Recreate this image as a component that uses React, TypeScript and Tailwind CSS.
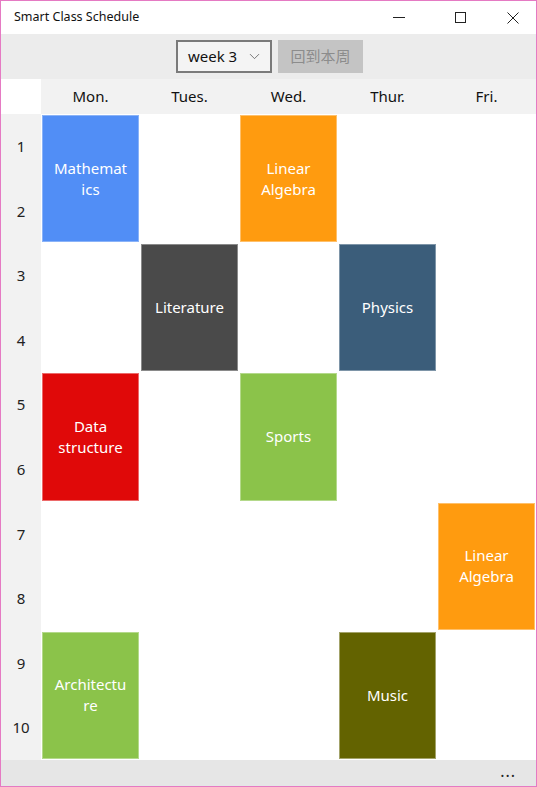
import { ChevronDown } from "lucide-react";

const days = ["Mon.", "Tues.", "Wed.", "Thur.", "Fri."];

type Course = { name: string; day: number; start: number; color: string; border: string };

// day: 1-5, start: first period (each class takes 2 periods)
const courses: Course[] = [
  { name: "Mathematics", day: 1, start: 1, color: "bg-[#518ef6]", border: "border-[#8ab3f8]" },
  { name: "Linear Algebra", day: 3, start: 1, color: "bg-[#ff9b0f]", border: "border-[#ffc06a]" },
  { name: "Literature", day: 2, start: 3, color: "bg-[#4a4a4a]", border: "border-[#8a8a8a]" },
  { name: "Physics", day: 4, start: 3, color: "bg-[#3b5d7a]", border: "border-[#7e95a8]" },
  { name: "Data structure", day: 1, start: 5, color: "bg-[#e00909]", border: "border-[#ec6a6a]" },
  { name: "Sports", day: 3, start: 5, color: "bg-[#8bc34a]", border: "border-[#b4d98b]" },
  { name: "Linear Algebra", day: 5, start: 7, color: "bg-[#ff9b0f]", border: "border-[#ffc06a]" },
  { name: "Architecture", day: 1, start: 9, color: "bg-[#8bc34a]", border: "border-[#b4d98b]" },
  { name: "Music", day: 4, start: 9, color: "bg-[#636300]", border: "border-[#a3a36a]" },
];

const colStart = ["", "col-start-1", "col-start-2", "col-start-3", "col-start-4", "col-start-5"];
const rowStart = ["", "row-start-1", "row-start-2", "row-start-3", "row-start-4", "row-start-5", "row-start-6", "row-start-7", "row-start-8", "row-start-9", "row-start-10"];

function TitleBar() {
  return (
    <div className="h-[33px] bg-white flex items-center">
      <span className="pl-[13px] text-[12.5px] text-[#111]">Smart Class Schedule</span>
      <div className="ml-auto flex h-full">
        <div className="w-[46px] flex items-center justify-center">
          <div className="w-[12px] h-px bg-[#222]" />
        </div>
        <div className="w-[56px] flex items-center justify-center ml-[10px]">
          <div className="w-[11px] h-[11px] border border-[#222]" />
        </div>
        <div className="w-[46px] flex items-center justify-center ml-[2px]">
          <svg width="12" height="12" viewBox="0 0 12 12">
            <path d="M0.5 0.5 L11.5 11.5 M11.5 0.5 L0.5 11.5" stroke="#222" strokeWidth="1" />
          </svg>
        </div>
      </div>
    </div>
  );
}

function Toolbar() {
  return (
    <div className="h-[45px] bg-[#ececec] flex items-center justify-center gap-[6px] pl-[2px]">
      <div className="w-[96px] h-[33px] border-2 border-[#7a7a7a] bg-[#f4f4f4] flex items-center pl-[10px] pr-[7px]">
        <span className="text-[15px] text-[#111]">week 3</span>
        <ChevronDown className="ml-auto w-[17px] h-[17px] text-[#555]" strokeWidth={1.1} />
      </div>
      <div className="w-[85px] h-[33px] bg-[#c4c4c4] flex items-center justify-center text-[15px] text-[#8c8c8c]">
        回到本周
      </div>
    </div>
  );
}

export default function App() {
  return (
    <div
      className="w-[537px] h-[787px] border border-[#e57ac3] flex flex-col overflow-hidden bg-white"
      style={{ fontFamily: '"Segoe UI", "Noto Sans", "Noto Sans CJK SC", sans-serif' }}
    >
      <TitleBar />
      <Toolbar />

      <div className="flex h-[35px]">
        <div className="w-[40px] bg-white" />
        <div className="flex-1 grid grid-cols-5 bg-[#f2f2f2]">
          {days.map((d) => (
            <div key={d} className="flex items-center justify-center text-[15px] text-[#111]">
              {d}
            </div>
          ))}
        </div>
      </div>

      <div className="flex h-[646px]">
        <div className="w-[40px] bg-[#f2f2f2] grid grid-rows-10">
          {Array.from({ length: 10 }, (_, i) => (
            <div key={i} className="flex items-center justify-center text-[15px] text-[#222]">
              {i + 1}
            </div>
          ))}
        </div>
        <div className="flex-1 grid grid-cols-5 grid-rows-10 bg-white">
          {courses.map((c, i) => (
            <div
              key={i}
              className={`${colStart[c.day]} ${rowStart[c.start]} row-span-2 p-px`}
            >
              <div
                className={`${c.color} ${c.border} border h-full flex items-center justify-center px-[10px] text-center text-white text-[15px] leading-[21px] break-words`}
              >
                <span className="w-full">{c.name}</span>
              </div>
            </div>
          ))}
        </div>
      </div>

      <div className="flex-1 bg-[#e6e6e6] flex items-center justify-end pr-[20px]">
        <span className="text-[16px] text-[#222] leading-none tracking-[1px] -mt-[4px]">...</span>
      </div>
    </div>
  );
}
